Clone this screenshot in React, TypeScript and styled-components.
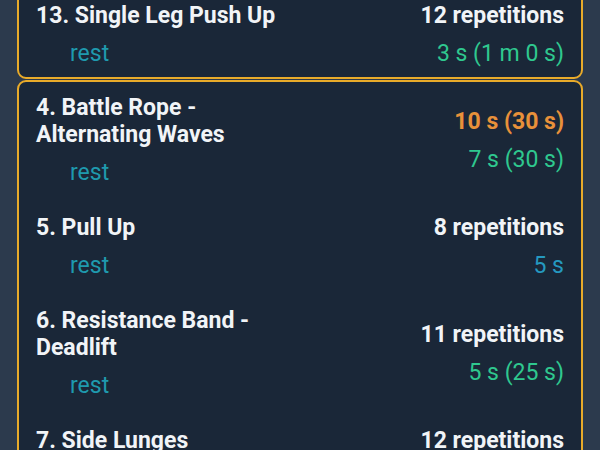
import React from 'react';
import styled, { createGlobalStyle } from 'styled-components';

const GlobalStyle = createGlobalStyle`
  html, body {
    margin: 0;
    padding: 0;
    background: #2c3a4d;
    font-family: Roboto, "Noto Sans", sans-serif;
  }
`;

const Screen = styled.div`
  width: 600px;
  height: 450px;
  overflow: hidden;
  background: #2c3a4d;
`;

// list is scrolled: the top of the first card sits above the window
const List = styled.div`
  display: flex;
  flex-direction: column;
  gap: 1px;
  padding: 0 17px;
  margin-top: -12px;
`;

const Card = styled.div`
  background: #1a2738;
  border: 2px solid #e9ab2a;
  border-radius: 9px;
  padding: 0 17px;
`;

const Row = styled.div`
  display: flex;
  align-items: center;
  padding: 14px 0;

  &:first-child {
    padding-top: 12px;
  }
  &:last-child {
    padding-bottom: 10px;
  }
`;

const Left = styled.div`
  flex: 0 0 50%;
  display: flex;
  flex-direction: column;
`;

const Right = styled.div`
  flex: 1;
  display: flex;
  flex-direction: column;
  align-items: flex-end;
`;

const Title = styled.div`
  color: #f1f4f7;
  font-size: 23px;
  font-weight: 700;
  line-height: 27px;
`;

const RestLabel = styled.div`
  color: #1f9aae;
  font-size: 23px;
  line-height: 27px;
  margin-top: 11px;
  padding-left: 34px;
`;

type Tone = 'white' | 'orange' | 'green' | 'blue';

const toneColor: Record<Tone, string> = {
  white: '#f1f4f7',
  orange: '#e8913a',
  green: '#2fc88f',
  blue: '#2599c0',
};

const Value = styled.div<{ $tone: Tone; $rest?: boolean }>`
  color: ${({ $tone }) => toneColor[$tone]};
  font-size: 23px;
  font-weight: ${({ $rest }) => ($rest ? 400 : 700)};
  line-height: 27px;
  margin-top: ${({ $rest }) => ($rest ? '11px' : '0')};
  white-space: nowrap;
`;

interface Exercise {
  title: string;
  value: string;
  tone: Tone;
  rest?: string;
  restTone?: Tone;
}

const groups: Exercise[][] = [
  [
    { title: '13. Single Leg Push Up', value: '12 repetitions', tone: 'white', rest: '3 s (1 m 0 s)', restTone: 'green' },
  ],
  [
    { title: '4. Battle Rope - Alternating Waves', value: '10 s (30 s)', tone: 'orange', rest: '7 s (30 s)', restTone: 'green' },
    { title: '5. Pull Up', value: '8 repetitions', tone: 'white', rest: '5 s', restTone: 'blue' },
    { title: '6. Resistance Band - Deadlift', value: '11 repetitions', tone: 'white', rest: '5 s (25 s)', restTone: 'green' },
    { title: '7. Side Lunges', value: '12 repetitions', tone: 'white' },
  ],
];

const App: React.FC = () => {
  return (
    <Screen>
      <GlobalStyle />
      <List>
        {groups.map((group, gi) => (
          <Card key={gi}>
            {group.map((ex) => (
              <Row key={ex.title}>
                <Left>
                  <Title>{ex.title}</Title>
                  {ex.rest && <RestLabel>rest</RestLabel>}
                </Left>
                <Right>
                  <Value $tone={ex.tone}>{ex.value}</Value>
                  {ex.rest && (
                    <Value $tone={ex.restTone || 'green'} $rest>
                      {ex.rest}
                    </Value>
                  )}
                </Right>
              </Row>
            ))}
          </Card>
        ))}
      </List>
    </Screen>
  );
};

export default App;
